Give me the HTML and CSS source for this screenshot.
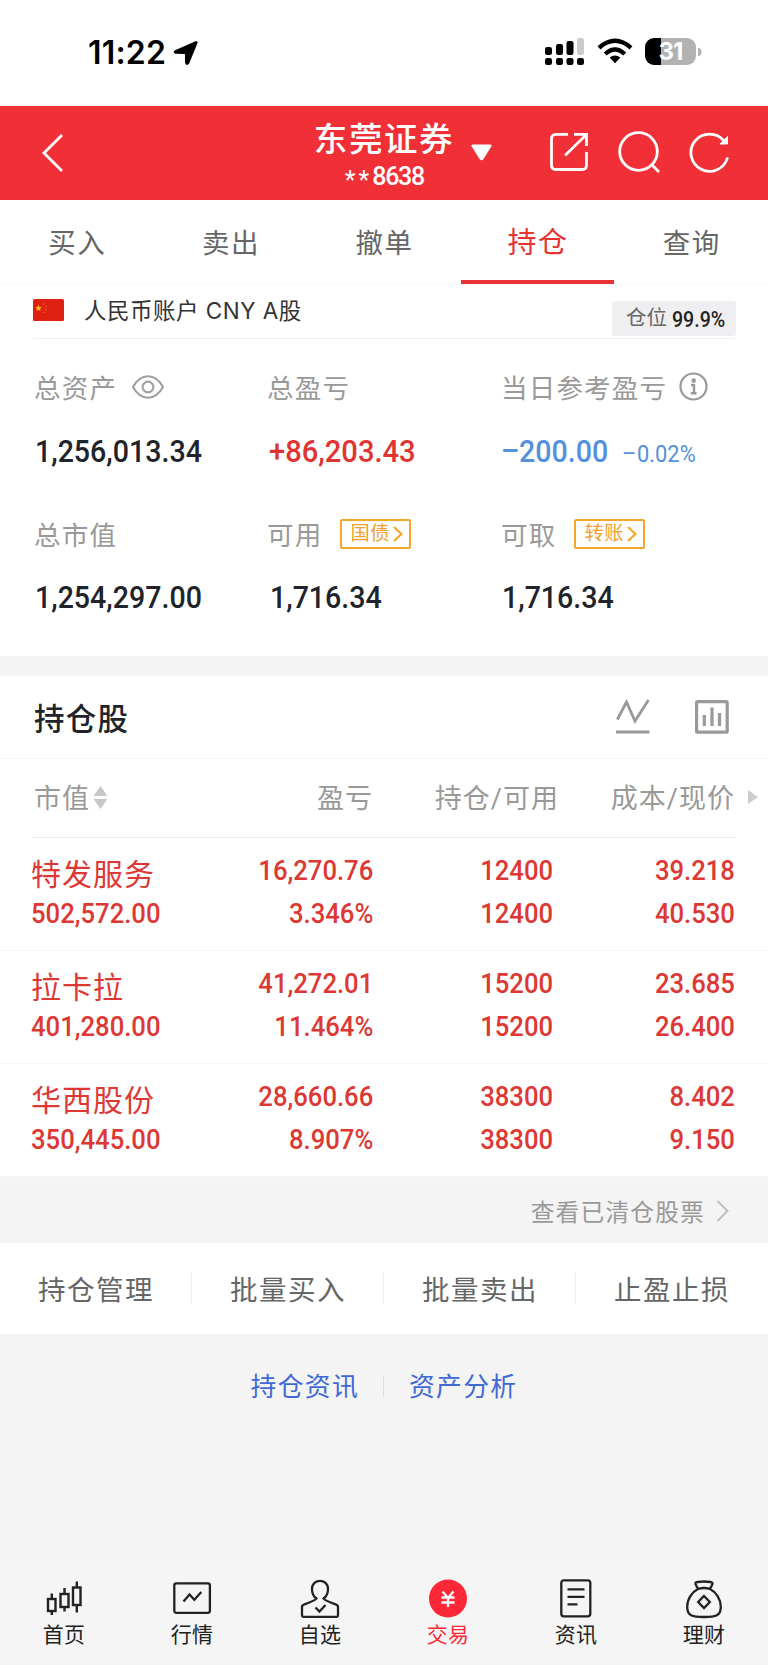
FILE: index.html
```html
<!DOCTYPE html>
<html lang="zh-CN">
<head>
<meta charset="utf-8">
<title>东莞证券 持仓</title>
<link rel="stylesheet" href="styles.css">
</head>
<body>
<div class="status">
  <span class="time">11:22</span>
  <svg class="loc" width="26" height="26" viewBox="0 0 26 26"><path d="M2 10.200 L22.500 1.300 Q25.300 .6 24.400 3.300 L16.300 23.300 Q13.600 27 12.100 23 L11.900 14.100 L2.600 13.800 Q-.9 12.400 2 10.200Z"/></svg>
  <svg class="signal" width="40" height="28" viewBox="0 0 40 28"><rect x="0" y="9" width="7" height="8" rx="2.200"/><rect x="11" y="6" width="7" height="11" rx="2.200"/><rect x="21.500" y="3" width="7" height="14" rx="2.200"/><rect x="32" y="0" width="7" height="17" rx="2.200" fill="#ccc"/><rect x="0" y="20" width="7" height="7" rx="2.200"/><rect x="11" y="20" width="7" height="7" rx="2.200"/><rect x="21.500" y="20" width="7" height="7" rx="2.200"/><rect x="32" y="20" width="7" height="7" rx="2.200"/></svg>
  <svg class="wifi" width="36" height="27" viewBox="0 0 36 27"><g fill="none" stroke="#000" stroke-width="4.400"><path d="M2 9.800 Q18 -4.200 34 9.800"/><path d="M8.200 16 Q18 7 27.800 16"/></g><path d="M12.600 19.600 Q18 15.300 23.400 19.600 L18 25.200Z"/></svg>
  <span class="battery"><span class="level">31</span><svg width="5" height="10" viewBox="0 0 5 10"><path d="M1 .5 Q4.600 2 4.600 5 Q4.600 8 1 9.500Z" fill="#b2b2b2"/></svg></span>
</div>

<header class="header">
  <svg class="back" width="24" height="42" viewBox="0 0 24 42"><path d="M21 2 L3 20 L21 38" fill="none" stroke="#fff" stroke-width="2.800"/></svg>
  <div class="account-title"><h1>东莞证券</h1><p><span class="stars">**</span><span class="tail">8638</span></p></div>
  <div class="actions">
    <svg class="caret" width="21" height="17" viewBox="0 0 21 17"><path d="M1.500 .5 H19.500 Q21.500 1 20 3 L12.500 15 Q10.500 17.500 8.500 15 L1 3 Q-.5 1 1.500 .5Z" fill="#fff"/></svg>
    <svg class="share" width="40" height="40" viewBox="0 0 40 40" fill="none" stroke="#fff" stroke-width="2.800"><path d="M19 2.400 H7 Q2.500 2.400 2.500 7 V33 Q2.500 37.500 7 37.500 H33 Q37.500 37.500 37.500 33 V20"/><path d="M25 2.400 H37.500 V14 M37 3 L16 23.500"/></svg>
    <svg class="search" width="43" height="43" viewBox="0 0 43 43" fill="none" stroke="#fff" stroke-width="2.800"><circle cx="20.500" cy="20.500" r="18.800"/><path d="M34 34 L41 41"/></svg>
    <svg class="refresh" width="42" height="43" viewBox="0 0 42 43" fill="none" stroke="#fff" stroke-width="2.800"><path d="M35 9 A18.600 18.600 0 1 0 38.500 25.500"/><path d="M38.500 4.500 V12 H31 Z" fill="#fff" stroke-width="1"/></svg>
  </div>
</header>

<nav class="tabs"><a>买入</a><a>卖出</a><a>撤单</a><a class="on">持仓</a><a>查询</a></nav>

<section class="account">
  <svg class="flag" width="31" height="22" viewBox="0 0 31 22"><rect width="31" height="22" rx="1.500" fill="#dd200f"/><path d="M5.500 5.800 L6.500 8 L8.800 8.100 L7 9.700 L7.600 12 L5.500 10.800 L3.400 12 L4 9.700 L2.200 8.100 L4.500 8Z" fill="#fcc011"/><g fill="#e8601a"><circle cx="10.500" cy="5" r=".9"/><circle cx="13" cy="7.500" r=".9"/><circle cx="13" cy="10.800" r=".9"/><circle cx="10.500" cy="13.300" r=".9"/></g></svg>
  <span class="account-name">人民币账户 CNY A股</span>
  <span class="ratio">仓位<b class="num">99.9%</b></span>
</section>

<section class="summary">
  <div class="cell"><div class="label">总资产<svg class="eye" width="32" height="24" viewBox="0 0 32 24" fill="none" stroke="#a0a0a0" stroke-width="2.100"><path d="M1 12 Q7 1.300 16 1.300 Q25 1.300 31 12 Q25 22.700 16 22.700 Q7 22.700 1 12Z"/><circle cx="16" cy="12" r="5.400"/></svg></div><div class="value"><span class="num">1,256,013.34</span></div></div>
  <div class="cell"><div class="label">总盈亏</div><div class="value up"><span class="num">+86,203.43</span></div></div>
  <div class="cell"><div class="label">当日参考盈亏<svg class="info" width="29" height="29" viewBox="0 0 29 29"><circle cx="14.500" cy="14.500" r="13" fill="none" stroke="#999" stroke-width="2.200"/><circle cx="14.700" cy="8.600" r="2.300" fill="#999"/><path d="M12 13 H15 V21 M11.800 21.300 H17.500" fill="none" stroke="#999" stroke-width="2.400"/></svg></div><div class="value down"><span class="num minus">–</span><span class="num amount">200.00</span><span class="num pct minus">–</span><span class="num pct">0.02%</span></div></div>
  <div class="cell"><div class="label">总市值</div><div class="value low"><span class="num">1,254,297.00</span></div></div>
  <div class="cell"><div class="label">可用<span class="pill">国债<svg width="10" height="16" viewBox="0 0 10 16"><path d="M1 1 L8.500 8 L1 15" fill="none" stroke="#f8a62b" stroke-width="2.200"/></svg></span></div><div class="value low inset"><span class="num">1,716.34</span></div></div>
  <div class="cell"><div class="label">可取<span class="pill">转账<svg width="10" height="16" viewBox="0 0 10 16"><path d="M1 1 L8.500 8 L1 15" fill="none" stroke="#f8a62b" stroke-width="2.200"/></svg></span></div><div class="value low"><span class="num">1,716.34</span></div></div>
</section>

<section class="holdings">
  <div class="holdings-head"><h2>持仓股</h2>
    <svg class="trend" width="34" height="35" viewBox="0 0 34 35" fill="none" stroke="#999" stroke-width="2.800"><path d="M1.300 20.500 L10.500 3 L19 22 L32.500 1"/><path d="M0 33 H33.500"/></svg>
    <svg class="bars" width="34" height="34" viewBox="0 0 34 34" fill="none" stroke="#999" stroke-width="3.200"><rect x="1.600" y="1.600" width="30.600" height="30.600" rx="1"/><path d="M9.300 15 V26 M17 7.500 V26 M24.500 13 V26"/></svg>
  </div>
  <div class="row columns"><span>市值<svg class="sort" width="15" height="23" viewBox="0 0 15 23" fill="#c8c8c8"><path d="M.5 10 L7.500 0 L14.500 10Z M.5 13 L7.500 23 L14.500 13Z"/></svg></span><span>盈亏</span><span>持仓/可用</span><span>成本/现价</span><svg class="more" width="10" height="14" viewBox="0 0 10 14"><path d="M0 0 L10 7 L0 14Z" fill="#ccc"/></svg></div>
  <div class="row stock"><div><em>特发服务</em><i class="num">502,572.00</i></div><div><i class="num">16,270.76</i><i class="num">3.346%</i></div><div><i class="num">12400</i><i class="num">12400</i></div><div><i class="num">39.218</i><i class="num">40.530</i></div></div>
  <div class="row stock"><div><em>拉卡拉</em><i class="num">401,280.00</i></div><div><i class="num">41,272.01</i><i class="num">11.464%</i></div><div><i class="num">15200</i><i class="num">15200</i></div><div><i class="num">23.685</i><i class="num">26.400</i></div></div>
  <div class="row stock"><div><em>华西股份</em><i class="num">350,445.00</i></div><div><i class="num">28,660.66</i><i class="num">8.907%</i></div><div><i class="num">38300</i><i class="num">38300</i></div><div><i class="num">8.402</i><i class="num">9.150</i></div></div>
</section>

<div class="cleared">查看已清仓股票<svg width="13" height="22" viewBox="0 0 13 22"><path d="M1.500 1 L11.500 11 L1.500 21" fill="none" stroke="#bfbfbf" stroke-width="2"/></svg></div>
<div class="ops"><a>持仓管理</a><a>批量买入</a><a>批量卖出</a><a>止盈止损</a></div>
<div class="links"><a>持仓资讯</a><a>资产分析</a></div>

<footer class="tabbar">
  <a><svg width="40" height="40" viewBox="0 0 40 40" fill="none" stroke="#222" stroke-width="2.400"><rect x="4" y="20" width="7.500" height="12"/><rect x="16.500" y="15" width="8" height="13"/><rect x="29" y="8.500" width="7.500" height="17.500"/><path d="M7.800 14.500 V20 M7.800 32 V36 M20.500 9 V15 M20.500 28 V32.500 M32.800 2.500 V8.500 M32.800 26 V33.500"/></svg>首页</a>
  <a><svg width="40" height="40" viewBox="0 0 40 40" fill="none" stroke="#222" stroke-width="2.300"><rect x="2.300" y="4.300" width="35.600" height="29.500" rx="2"/><path d="M11.500 22.500 L17.500 15.500 L22.300 20.800 L29.300 13"/></svg>行情</a>
  <a><svg width="40" height="40" viewBox="0 0 40 40" fill="none" stroke="#222" stroke-width="2.300"><path d="M16.500 19.500 C12.500 17 12 13 12 10 C12 -.8 28 -.8 28 10 C28 13 27.500 17 23.500 19.500 Q24 21 35.500 25.300 Q38 26.300 38 28 V36.500 Q38 37.800 36.700 37.800 H3.300 Q2 37.800 2 36.500 V28 Q2 26.300 4.500 25.300 Q16 21 16.500 19.500Z"/><path d="M15.500 28.500 L19.500 32.500 L25.500 26"/></svg>自选</a>
  <a class="on"><svg width="40" height="40" viewBox="0 0 40 40"><circle cx="20" cy="19.500" r="19" fill="#fd2738"/><path d="M14.500 12.500 L20 19 L25.500 12.500 M20 18.500 V28 M13.500 18.500 H26.500 M13.500 23.500 H26.500" fill="none" stroke="#fff" stroke-width="2.300"/></svg>交易</a>
  <a><svg width="40" height="40" viewBox="0 0 40 40" fill="none" stroke="#222" stroke-width="2.300"><rect x="5.300" y="1.300" width="29" height="36" rx="2.500"/><path d="M11.500 10.300 H28.500 M11.500 17.800 H28.500 M11.500 25.300 H21.500"/></svg>资讯</a>
  <a><svg width="40" height="40" viewBox="0 0 40 40" fill="none" stroke="#222" stroke-width="2.300"><path d="M14 10 L11.500 5 Q11 3 13.500 3 Q20 2 26.500 3 Q29 3.500 28.500 5 L26 10 C32 13 36.800 20 36.800 28 C36.800 36.500 32 38 20 38 C8 38 3.200 36.500 3.200 28 C3.200 20 8 13 14 10Z M14 10 Q20 8 26 10"/><path d="M20 17 L25.800 23 L20 29 L14.200 23Z"/></svg>理财</a>
</footer>
</body>
</html>
```

FILE: styles.css
```css
* { box-sizing: border-box; }
body { margin: 0; width: 768px; height: 1665px; background: #f4f4f4; color: #222; font-family: Roboto, "Noto Sans CJK SC", sans-serif; display: flex; flex-direction: column; overflow: hidden; }
body > * { flex: none; }
svg { display: block; flex: none; }
h1, h2, p { margin: 0; }
em, i { font-style: normal; display: block; }
.num { display: inline-block; font-family: Roboto, sans-serif; font-weight: 500; white-space: nowrap; transform: scaleX(.91); transform-origin: left center; }

.status { height: 106px; background: #fff; display: flex; align-items: flex-start; padding: 38px 0 0 88px; font-family: Inter, sans-serif; }
.time { width: 85px; margin-top: -1px; color: #000; font-size: 32px; line-height: 31px; font-weight: 600; letter-spacing: .2px; white-space: nowrap; }
.loc { margin-top: 2px; }
.signal { margin-left: 346px; }
.wifi { margin-left: 12px; }
.battery { margin-left: 12px; display: flex; align-items: center; gap: 1px; }
.level { width: 51px; height: 27px; border-radius: 9px; background: linear-gradient(90deg, #000 16px, #b2b2b2 16px); color: #fff; font-size: 24px; line-height: 28px; font-weight: 700; text-align: center; letter-spacing: -.8px; }

.header { height: 94px; background: #f12f37; color: #fff; display: grid; grid-template-columns: 315px 138px 315px; }
.back { margin: 27px 0 0 41px; }
.account-title { display: flex; flex-direction: column; align-items: center; padding-top: 13px; }
.account-title h1 { font-size: 33.5px; line-height: 41px; font-weight: 500; letter-spacing: 1.6px; white-space: nowrap; }
.account-title p { display: flex; font-size: 25px; line-height: 33px; }
.stars { letter-spacing: 3px; padding-top: 4px; line-height: 34px; }
.tail { width: 51px; letter-spacing: -1.3px; font-weight: 500; }
.actions { display: flex; }
.caret { margin: 38px 0 0 18px; }
.share { margin: 26px 0 0 57px; }
.search { margin: 25px 0 0 29px; }
.refresh { margin: 26px 0 0 28px; }

.tabs { height: 84px; background: #fff; display: grid; grid-template-columns: repeat(5, 1fr); border-bottom: 1px solid #fafafa; }
.tabs a { display: flex; justify-content: center; font-size: 27.5px; line-height: 87px; letter-spacing: 1.5px; padding-left: 1px; color: #666; height: 84px; }
.tabs .on { color: #e73331; font-size: 29px; border-bottom: 4px solid #e73331; line-height: 87px; }

.account { height: 55px; display: flex; padding: 15px 32px 0 33px; background: linear-gradient(#efefef, #efefef) 33px 54px / 702px 1px no-repeat #fff; }
.account-name { margin-left: 20px; font-size: 22.5px; line-height: 24px; letter-spacing: .5px; color: #333; font-family: Inter, "Noto Sans CJK SC", sans-serif; white-space: nowrap; width: 400px; }
.ratio { margin: 2px 0 0 auto; width: 124px; height: 35px; border-radius: 3px; background: #efeff1; font-size: 20.5px; line-height: 35px; color: #666; padding-left: 14px; display: flex; white-space: nowrap; }
.ratio .num { color: #222; font-size: 21.5px; line-height: 37px; margin-left: 5px; transform: scaleX(.91); }

.summary { height: 317px; background: #fff; padding: 23px 0 0 34px; display: grid; grid-template-columns: 233px 234px 1fr; grid-template-rows: 147px 146px; }
.label { height: 49px; display: flex; align-items: center; font-size: 26.5px; letter-spacing: 1.2px; color: #999; white-space: nowrap; }
.value { height: 80px; display: flex; align-items: center; font-size: 32px; color: #20242a; padding-left: 1px; }
.value.low { height: 78px; }
.value .num { transform: scaleX(.893); }
.value.up .num { transform: scaleX(.91); }
.inset { padding-left: 3px; }
.eye { margin-left: 15px; }
.info { margin-left: 12px; }
.value.up { color: #e03432; padding-left: 2px; }
.value.down { color: #5490dc; padding-left: 0; }
.minus { width: 18px; }
.amount { width: 103px; }
.pct { font-size: 24.5px; padding-top: 4px; }
.pct.minus { width: 15px; }
.value .pct { font-weight: 400; }
.value .amount { flex: none; }
.pill { margin-left: 18px; width: 71px; height: 30px; border: 2px solid #f8a62b; border-radius: 2px; color: #f3a02b; font-size: 19.3px; letter-spacing: .5px; display: flex; align-items: center; line-height: 26px; padding: 1px 0 0 8px; }
.pill svg { margin: -1px 0 0 3px; }

.holdings { border-top: 20px solid #f4f4f4; background: #fff; height: 521px; }
.holdings-head { height: 83px; display: flex; padding: 0 39px 0 34px; border-bottom: 1px solid #f5f5f5; }
.holdings-head h2 { font-size: 30.5px; line-height: 87px; letter-spacing: 1.2px; font-weight: 500; color: #20242a; flex: 1; }
.trend { margin-top: 23px; }
.bars { margin: 24px 0 0 45px; }
.row { display: grid; grid-template-columns: 189px 153px 180px 182px 1fr; padding-left: 31px; border-bottom: 1px solid #f7f7f7; }
.row > :nth-child(n+2) { text-align: right; justify-self: end; }
.columns { height: 79px; line-height: 80px; font-size: 27px; letter-spacing: 1px; color: #999; white-space: nowrap; background: linear-gradient(#ececec, #ececec) 33px 78px / 702px 1px no-repeat; border: 0; }
.columns > span:first-child { display: flex; align-items: center; padding-left: 3px; }
.columns > span:nth-child(3) { margin-right: -6px; }
.sort { margin-left: 3px; margin-top: -3px; }
.row > .more { justify-self: start; margin: 31px 0 0 13px; }
.stock { height: 113px; color: #dd3834; font-size: 28.2px; padding-top: 11px; }
.stock em { font-size: 30px; line-height: 51px; height: 43px; letter-spacing: 1px; white-space: nowrap; }
.stock .num { display: block; line-height: 43px; height: 43px; }
.stock > :nth-child(n+2) .num { transform-origin: right center; }

.cleared { height: 66px; display: flex; justify-content: flex-end; align-items: center; padding: 1px 39px 0 0; font-size: 23.8px; letter-spacing: 1.1px; color: #999; }
.cleared svg { margin-left: 11px; }
.ops { height: 91px; background: #fff; display: grid; grid-template-columns: repeat(4, 1fr); }
.ops a { display: flex; justify-content: center; font-size: 27.5px; line-height: 95px; letter-spacing: 1.5px; color: #666; background: linear-gradient(#eee, #eee) right 29px / 1px 33px no-repeat; }
.ops a:last-child { background: none; }
.links { height: 230px; display: grid; grid-template-columns: 383px 385px; background: linear-gradient(#ddd, #ddd) 383px 42px / 1px 21px no-repeat; }
.links a { font-size: 25.8px; line-height: 107px; letter-spacing: 1.3px; color: #4169d4; text-align: right; padding-right: 24px; }
.links a + a { text-align: left; padding: 0 0 0 26px; }
.tabbar { height: 100px; background: #f5f5f5; display: grid; grid-template-columns: repeat(6, 1fr); }
.tabbar a { display: flex; flex-direction: column; align-items: center; padding-top: 15px; font-size: 21px; line-height: 33px; letter-spacing: .3px; color: #222; }
.tabbar .on { color: #fd2738; }
```
